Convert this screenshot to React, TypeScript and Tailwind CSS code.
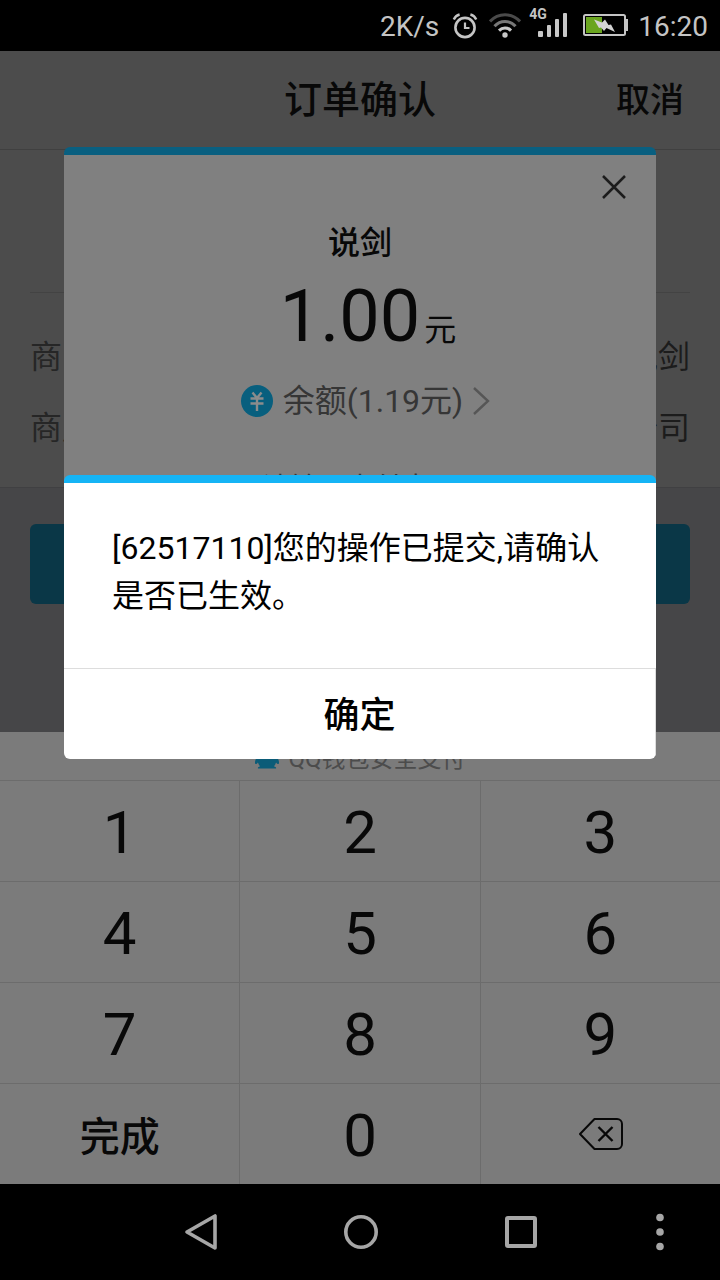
import type { ReactNode } from "react";

const keys = ["1", "2", "3", "4", "5", "6", "7", "8", "9", "完成", "0", "del"];

const orderRows = [
  { label: "商品", value: "说剑" },
  { label: "商户", value: "公司" },
];

function AlarmIcon() {
  return (
    <svg width="34" height="28" viewBox="-2 0 34 28" fill="none" stroke="#c4c4c4">
      <circle cx="16" cy="15.5" r="9.6" strokeWidth="2.6" />
      <path d="M16 10.5v5.5h4.5" strokeWidth="2.2" />
      <path d="M4.8 7.5c1-2.4 3-4.3 5.8-5M27.2 7.5c-1-2.4-3-4.3-5.8-5" strokeWidth="2.4" />
    </svg>
  );
}

function WifiIcon() {
  return (
    <svg width="32" height="28" viewBox="0 0 32 28" fill="none" strokeWidth="3">
      <path d="M1 9.5C9.2.5 22.8.5 31 9.5" stroke="#4a4a4a" />
      <path d="M5.5 14.2c5.8-6.4 15.2-6.4 21 0" stroke="#777777" />
      <path d="M10 18.6c3.4-3.6 8.6-3.6 12 0" stroke="#c8c8c8" />
      <circle cx="16" cy="23" r="2.7" fill="#c8c8c8" stroke="none" />
    </svg>
  );
}

function SignalIcon() {
  return (
    <div className="relative">
      <span className="absolute -top-1 left-0 text-sm leading-3 font-bold">4G</span>
      <svg width="46" height="28" viewBox="0 0 46 28" fill="#c8c8c8">
        <rect x="9" y="19" width="5" height="6" rx="1" />
        <rect x="18" y="13" width="4" height="12" rx="1" />
        <rect x="26" y="7" width="4" height="18" rx="1" />
        <rect x="34" y="1" width="4" height="24" rx="1" />
      </svg>
    </div>
  );
}

function BatteryIcon() {
  return (
    <svg width="47" height="28" viewBox="0 0 47 28">
      <rect x="1" y="3" width="41" height="20" rx="1.5" fill="none" stroke="#c4c4c4" strokeWidth="2" />
      <rect x="3" y="5" width="16" height="16" fill="#6aa51f" />
      <path d="M42 8h2v10h-2" fill="none" stroke="#c4c4c4" strokeWidth="2" />
      <path d="M11 7.5L19 10.500 22 7.500 25.500 13 28 12.500 32 20 23.500 16 21 19 18 15.500 16 16z" fill="#d4d4d4" />
    </svg>
  );
}

function CloseIcon() {
  return (
    <svg width="24" height="24" viewBox="0 0 24 24" stroke="#1c1c1c" strokeWidth="2.5">
      <path d="M1 1l22 22M23 1L1 23" />
    </svg>
  );
}

function YuanIcon() {
  return (
    <svg width="32" height="32" viewBox="0 0 32 32">
      <circle cx="16" cy="16" r="16" fill="#085f7e" />
      <path
        d="M11.5 7.5l4.5 5.5 4.5-5.5M9.5 13.500h13M9.500 18.500h13M16 13v13"
        fill="none"
        stroke="#8c8c8c"
        strokeWidth="2.4"
      />
    </svg>
  );
}

function ChevronIcon() {
  return (
    <svg width="18" height="28" viewBox="0 0 18 28" fill="none" stroke="#565656" strokeWidth="2.4">
      <path d="M1 1l14 13L1 27" />
    </svg>
  );
}

function PenguinIcon() {
  return (
    <svg width="26" height="28" viewBox="0 0 26 28" fill="#0b5c78">
      <path d="M13 1C8 1 4.500 5 4.500 10c0 2-1 3-2 5.500-1.500 3-2 5.500-1 6.500.8.5 2-1 2.500-1.500.3 1.500 1 2.700 2 3.700-1.500.6-2.500 1.300-2 2.300h18c.5-1-.5-1.700-2-2.300 1-1 1.700-2.200 2-3.700.5.5 1.700 2 2.500 1.500 1-1 .5-3.500-1-6.500-1-2.500-2-3.500-2-5.500C21.500 5 18 1 13 1z" />
    </svg>
  );
}

function BackspaceIcon() {
  return (
    <svg width="44" height="32" viewBox="0 0 44 32" fill="none" stroke="#080808" strokeWidth="2">
      <path d="M15.5 1H38a5 5 0 0 1 5 5v20a5 5 0 0 1-5 5H15.5L1 16z" strokeLinejoin="round" />
      <path d="M19.5 9l14 14M33.5 9l-14 14" strokeWidth="2.4" />
    </svg>
  );
}

function StatusBar() {
  return (
    <div className="flex h-[51px] items-center justify-end gap-2 bg-black pr-3 text-[28px] leading-8 text-[#c4c4c4]">
      <span className="pt-0.5">2K/s</span>
      <AlarmIcon />
      <WifiIcon />
      <SignalIcon />
      <BatteryIcon />
      <span className="pt-0.5">16:20</span>
    </div>
  );
}

function OrderPage() {
  return (
    <main className="flex-1 bg-[#464648]">
      <header className="grid h-[99px] grid-cols-3 items-center border-b border-[#404040] bg-[#4c4c4c] font-medium text-[#080808]">
        <h1 className="col-start-2 text-center text-[38px] leading-12">订单确认</h1>
        <button className="justify-self-end pr-9 text-[34px] leading-12">取消</button>
      </header>
      <section className="border-b border-[#404042] bg-[#4c4c4c] px-[30px] pb-6">
        <div className="mb-7 h-[143px] border-b border-[#434343]" />
        <dl className="text-[32px]">
          {orderRows.map((row) => (
            <div key={row.label} className="flex h-[71px] items-center justify-between">
              <dt className="text-[#262626]">{row.label}</dt>
              <dd className="text-[#1c1c1c]">{row.value}</dd>
            </div>
          ))}
        </dl>
      </section>
      <div className="px-[30px] pt-9 pb-32">
        <button aria-label="支付" className="block h-20 w-full rounded-md bg-[#0a3747]" />
      </div>
    </main>
  );
}

function Keypad() {
  return (
    <section className="bg-[#7b7b7b]">
      <div className="flex h-12 items-center justify-center gap-2 text-2xl text-[#4c4c4c]">
        <PenguinIcon />
        <span className="pt-1.5">QQ钱包安全支付</span>
      </div>
      <div className="grid grid-cols-3 gap-px bg-[#6c6c6c] pt-px">
        {keys.map((key) => (
          <button
            key={key}
            aria-label={key === "del" ? "删除" : undefined}
            className={`flex h-[100px] items-center justify-center bg-[#7b7b7b] text-[#080808] ${
              key === "del" ? "pl-0.5" : key === "完成" ? "pt-2 text-[40px] font-medium" : "pt-1 text-[60px]"
            }`}
          >
            {key === "del" ? <BackspaceIcon /> : key}
          </button>
        ))}
      </div>
    </section>
  );
}

function NavButton({ label, children }: { label: string; children: ReactNode }) {
  return (
    <button aria-label={label} className="flex items-center justify-center">
      <svg width="36" height="40" viewBox="0 0 36 40" fill="none" stroke="#a6a6a6" strokeWidth="4">
        {children}
      </svg>
    </button>
  );
}

function NavBar() {
  return (
    <nav className="grid h-24 grid-cols-[3fr_4fr_4fr_4fr_3fr] bg-black">
      <span />
      <NavButton label="返回">
        <path d="M33 4v32L5 20z" strokeWidth="3.6" strokeLinejoin="round" />
      </NavButton>
      <NavButton label="主页">
        <circle cx="19" cy="20" r="15.2" strokeWidth="3.6" />
      </NavButton>
      <NavButton label="最近">
        <rect x="5" y="6" width="28" height="28" rx="1" />
      </NavButton>
      <NavButton label="菜单">
        <g fill="#a6a6a6" stroke="none">
          <circle cx="18" cy="5.5" r="3.8" />
          <circle cx="18" cy="20" r="3.8" />
          <circle cx="18" cy="34.5" r="3.8" />
        </g>
      </NavButton>
    </nav>
  );
}

function PayDialog() {
  return (
    <section className="absolute inset-x-16 top-[147px] overflow-hidden rounded-t-md border-t-8 border-[#095f80] bg-[#808080] pb-32 text-center text-[32px]">
      <div className="flex h-16 items-center justify-end pr-[30px]">
        <button aria-label="关闭">
          <CloseIcon />
        </button>
      </div>
      <h2 className="leading-12 font-medium text-[#080808]">说剑</h2>
      <p className="flex items-baseline justify-center gap-1 pt-1.5 pl-4 text-[#080808]">
        <span className="text-[72px] leading-[88px]">1.00</span>
        <span>元</span>
      </p>
      <button className="mt-5 flex w-full items-center justify-center gap-2.5 pl-3 leading-10 text-[#363636]">
        <YuanIcon />
        <span>余额(1.19元)</span>
        <ChevronIcon />
      </button>
      <p className="mt-11 text-[28px] leading-12 text-[#363636]">请输入支付密码</p>
    </section>
  );
}

function AlertDialog() {
  return (
    <section
      role="alertdialog"
      className="absolute inset-x-16 top-[475px] overflow-hidden rounded-md border-t-8 border-[#15b4f5] bg-white text-black"
    >
      <p className="px-12 pt-[41px] pb-12 text-[32px] leading-12">
        [62517110]您的操作已提交,请确认是否已生效。
      </p>
      <button className="h-[91px] w-full border-t border-r border-[#dddddd] pt-1 text-4xl font-medium">确定</button>
    </section>
  );
}

export default function App() {
  return (
    <div
      lang="zh-CN"
      className="relative flex min-h-screen flex-col [font-family:Roboto,'Noto_Sans_CJK_SC',sans-serif]"
    >
      <StatusBar />
      <OrderPage />
      <Keypad />
      <NavBar />
      <PayDialog />
      <AlertDialog />
    </div>
  );
}
